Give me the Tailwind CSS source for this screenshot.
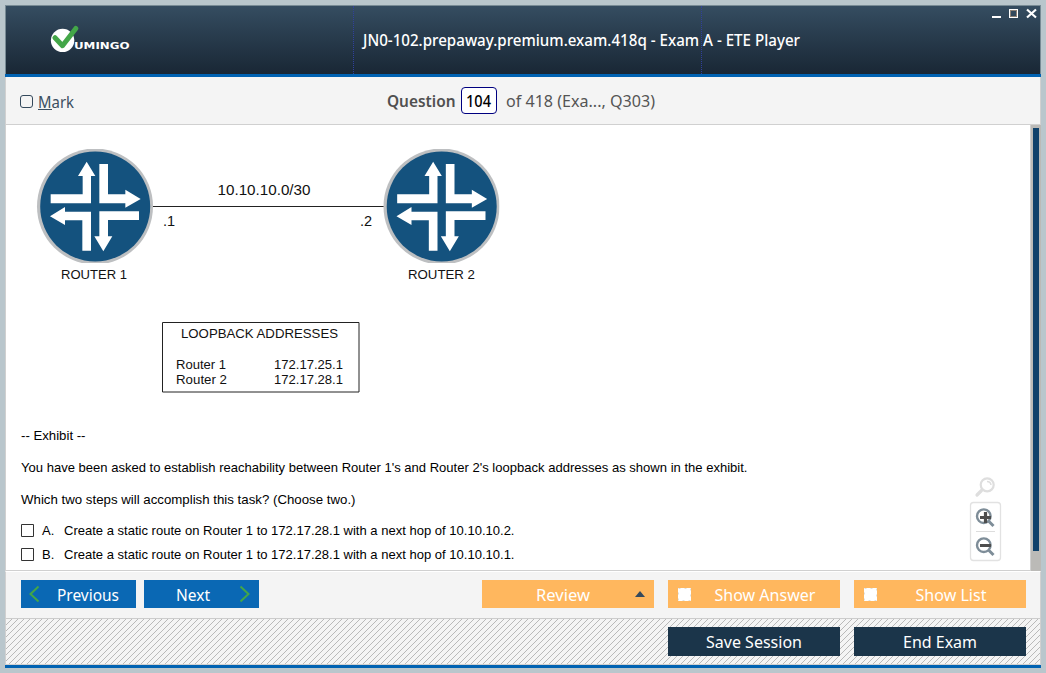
<!DOCTYPE html>
<html lang="en">
<head>
<meta charset="utf-8">
<title>ETE Player</title>
<script src="https://cdn.jsdelivr.net/npm/@tailwindcss/browser@4"></script>
</head>
<body class="w-[1046px] h-[673px] overflow-hidden bg-[#b9c6cc] p-[5px] font-['Noto_Sans',sans-serif]">
<div class="flex h-[663px] w-[1036px] flex-col">
  <header class="grid h-[69px] shrink-0 border border-b-0 border-[#788b95] bg-linear-to-b from-[#354d61] to-[#192735]">
    <div class="col-start-1 row-start-1 flex">
      <div class="w-[348px] shrink-0 border-r border-dotted border-[#30409c]">
        <svg class="ml-[44px] mt-[19px] block" width="84" height="30" viewBox="50 25 84 30">
          <circle cx="62.6" cy="40.4" r="11.7" fill="#fff"/>
          <path d="M55 37.700l7.500 8L75.800 28.400" fill="none" stroke="#43a648" stroke-width="5" stroke-linecap="round" stroke-linejoin="round"/>
          <text x="74" y="49" font-family="DejaVu Sans" font-weight="bold" font-size="9" fill="#fff" textLength="55.500" lengthAdjust="spacingAndGlyphs">UMINGO</text>
        </svg>
      </div>
      <div class="w-[348px] shrink-0 border-r border-dotted border-[#30409c]"></div>
    </div>
    <div class="col-start-1 row-start-1 flex items-start justify-between pl-[353px] pr-[2px]">
      <h1 class="mt-[20px]">
        <svg class="block" width="448" height="30"><text x="4" y="20" font-size="15.500" font-weight="500" fill="#fff" textLength="437" lengthAdjust="spacingAndGlyphs">JN0-102.prepaway.premium.exam.418q - Exam A - ETE Player</text></svg>
      </h1>
      <svg class="mt-[2px] block" width="48" height="12" viewBox="990 8 48 12" shape-rendering="crispEdges">
        <path d="M992 16h9v2h-9z" fill="#fff"/>
        <path d="M1009.500 9.500h8v8h-8z" fill="none" stroke="#fff"/>
        <path d="M1010.500 10.500h6v6h-6z" fill="none" stroke="#8d8176"/>
        <path d="M1027 9.500l9 8M1036 9.500l-9 8" stroke="#fff" stroke-width="2.200" shape-rendering="auto"/>
      </svg>
    </div>
  </header>
  <div class="h-[3px] shrink-0 bg-[#0062b2]"></div>

  <section class="flex h-[48px] shrink-0 border-x border-b border-[#d0d0d0] bg-[#f4f4f4]">
    <label class="flex w-[381px] items-start pl-[14px]">
      <span class="mt-[18px] block size-[13px] rounded-[3px] border border-[#34495c]"></span>
      <svg class="ml-[4px] mt-[12px] block" width="44" height="28"><text x="1" y="19" font-size="16" fill="#3c4f61" textLength="36" lengthAdjust="spacingAndGlyphs">Mark</text><path d="M1 20.500h14" stroke="#3c4f61"/></svg>
    </label>
    <div class="flex">
      <svg class="mt-[12px] block" width="74" height="28"><text x="0" y="18" font-size="16" font-weight="600" fill="#505050" textLength="68.500" lengthAdjust="spacingAndGlyphs">Question</text></svg>
      <div class="mt-[10px] h-[27px] w-[36px] rounded-[4px] border border-[#000080] bg-white"><svg class="block" width="34" height="25"><text x="4" y="19" font-size="15.500" font-weight="500" fill="#000" textLength="25" lengthAdjust="spacingAndGlyphs">104</text></svg></div>
      <svg class="ml-[9px] mt-[12px] block" width="155" height="28"><text x="0" y="18" font-size="16" fill="#555" textLength="149" lengthAdjust="spacingAndGlyphs">of 418 (Exa..., Q303)</text></svg>
    </div>
  </section>

  <main class="relative flex h-[446px] shrink-0 border-l border-[#d0d0d0] bg-white font-['Liberation_Sans',sans-serif]">
    <div class="w-[1025px] shrink-0 border-b border-r border-[#d0d0d0] text-[#000]">
      <svg class="block" width="1024" height="445" viewBox="6 125 1024 445" font-family="Liberation Sans">
        <defs>
          <clipPath id="badge"><path d="M36 149h117v114H36z"/></clipPath>
          <g id="router">
            <g clip-path="url(#badge)">
              <circle cx="95" cy="206.500" r="58" fill="#bdbfc1"/>
              <circle cx="95.200" cy="206.500" r="55" fill="#14527e"/>
            </g>
            <g transform="translate(20 140) scale(.33333)" fill="#fff">
              <path d="M200 65l26 43h-13v82H92v-27h96v-55h-14zM238 72h26v91h52v-14l46 28-46 26v-13h-78zM90 229l45-28v14h78v117h-26v-91h-52v14zM357 214v26h-93v49h13l-27 45-27-45h15v-75z"/>
            </g>
          </g>
        </defs>
        <path d="M153 206.500h232" stroke="#222"/>
        <use href="#router"/>
        <use href="#router" x="346.500"/>
        <g fill="#111" font-size="13.500">
          <text x="217.500" y="195" font-size="14.500" textLength="93" lengthAdjust="spacingAndGlyphs">10.10.10.0/30</text>
          <text x="163" y="226" font-size="14.500">.1</text>
          <text x="360" y="226" font-size="14.500">.2</text>
          <text x="61" y="279" textLength="66" lengthAdjust="spacingAndGlyphs">ROUTER 1</text>
          <text x="408" y="279" textLength="67" lengthAdjust="spacingAndGlyphs">ROUTER 2</text>
          <path d="M162.500 322.500h196.500v69.500h-196.500z" fill="none" stroke="#222"/>
          <text x="181" y="337.500" font-size="13" textLength="157" lengthAdjust="spacingAndGlyphs">LOOPBACK ADDRESSES</text>
          <text x="176" y="369" font-size="13" textLength="50" lengthAdjust="spacingAndGlyphs">Router 1</text>
          <text x="274" y="369" font-size="13" textLength="69" lengthAdjust="spacingAndGlyphs">172.17.25.1</text>
          <text x="176" y="384" font-size="13" textLength="51" lengthAdjust="spacingAndGlyphs">Router 2</text>
          <text x="274" y="384" font-size="13" textLength="69" lengthAdjust="spacingAndGlyphs">172.17.28.1</text>
        </g>
        <g fill="#000" font-size="13">
          <text x="21" y="440" textLength="64.500" lengthAdjust="spacingAndGlyphs">-- Exhibit --</text>
          <text x="21" y="472" textLength="726.500" lengthAdjust="spacingAndGlyphs">You have been asked to establish reachability between Router 1's and Router 2's loopback addresses as shown in the exhibit.</text>
          <text x="21" y="504" textLength="334.500" lengthAdjust="spacingAndGlyphs">Which two steps will accomplish this task? (Choose two.)</text>
          <path d="M21.500 524.500h12v12h-12zM21.500 548.500h12v12h-12z" fill="#fff" stroke="#333"/>
          <text x="42" y="535">A.</text>
          <text x="64" y="535" textLength="450.500" lengthAdjust="spacingAndGlyphs">Create a static route on Router 1 to 172.17.28.1 with a next hop of 10.10.10.2.</text>
          <text x="42" y="559">B.</text>
          <text x="64" y="559" textLength="450.500" lengthAdjust="spacingAndGlyphs">Create a static route on Router 1 to 172.17.28.1 with a next hop of 10.10.10.1.</text>
        </g>
      </svg>
    </div>
    <div class="flex w-[10px] shrink-0 justify-center bg-[#bbbab7] pt-[3px]"><div class="h-[423px] w-[6px] bg-[#0f416b]"></div></div>
    <svg class="absolute left-[962px] top-[348px]" width="36" height="92" viewBox="968 473 36 92" fill="none">
      <circle cx="987.200" cy="484.800" r="6.500" stroke="#dedede" stroke-width="2.200"/>
      <path d="M981.500 490.500l-4.500 4.500" stroke="#dedede" stroke-width="3.200" stroke-linecap="round"/>
      <path d="M987 481.500q3.500 0 4 3.500" stroke="#dedede" stroke-width="1.500"/>
      <rect x="970.500" y="502.500" width="30" height="58" rx="3" fill="#fff" stroke="#e2e2e2" stroke-width="1.300"/>
      <path d="M976 531.500h19" stroke="#ddd"/>
      <g stroke="#7e8d98"><circle cx="983.800" cy="516.200" r="6.800" stroke-width="2.400"/><path d="M988.500 521l5 5" stroke-width="3"/>
      <circle cx="983.800" cy="545.200" r="6.800" stroke-width="2.400"/><path d="M988.500 550l5 5" stroke-width="3"/></g>
      <path d="M980 517.500h11M985.500 512v11M980 545.500h11" stroke="#4d4d4d" stroke-width="3.200"/>
    </svg>
  </main>

  <section class="flex h-[48px] shrink-0 items-start border-x border-b border-t border-x-[#d0d0d0] border-b-[#ccc] border-t-white bg-[#f4f4f4] pl-[15px] pt-[8px]">
    <button class="block h-[28px] w-[115px] bg-[#0a68b4]"><svg class="block" width="115" height="28"><path d="M17.500 6.500l-8 7.500 8 7.500" fill="none" stroke="#43a648" stroke-width="2"/><text x="36" y="21" font-size="16" fill="#fff" textLength="62" lengthAdjust="spacingAndGlyphs">Previous</text></svg></button>
    <button class="ml-[8px] block h-[28px] w-[115px] bg-[#0a68b4]"><svg class="block" width="115" height="28"><path d="M96.500 6.500l8 7.500-8 7.500" fill="none" stroke="#43a648" stroke-width="2"/><text x="32" y="21" font-size="16" fill="#fff" textLength="34" lengthAdjust="spacingAndGlyphs">Next</text></svg></button>
    <div class="ml-[223px] flex gap-[14px]">
      <button class="block h-[28px] w-[172px] bg-[#ffb75e]"><svg class="block" width="172" height="28"><text x="54" y="21" font-size="16" fill="#fff" textLength="54" lengthAdjust="spacingAndGlyphs">Review</text><path d="M153 17l5-6 5 6z" fill="#34495c"/></svg></button>
      <button class="block h-[28px] w-[172px] bg-[#ffb75e]"><svg class="block" width="172" height="28"><path d="M10 8h13v13H10z" fill="#fff"/><path d="M10.500 8.500h12v12h-12z" fill="none" stroke="#dfe0de" stroke-dasharray="2 4"/><text x="46.500" y="21" font-size="16" fill="#fff" textLength="101" lengthAdjust="spacingAndGlyphs">Show Answer</text></svg></button>
      <button class="block h-[28px] w-[172px] bg-[#ffb75e]"><svg class="block" width="172" height="28"><path d="M10 8h13v13H10z" fill="#fff"/><path d="M10.500 8.500h12v12h-12z" fill="none" stroke="#dfe0de" stroke-dasharray="2 4"/><text x="61.500" y="21" font-size="16" fill="#fff" textLength="71" lengthAdjust="spacingAndGlyphs">Show List</text></svg></button>
    </div>
  </section>

  <footer class="grid h-[46px] shrink-0 border-x border-b border-[#d0d0d0] bg-[#f4f4f4]">
    <svg class="col-start-1 row-start-1 block" width="1034" height="45"><defs><pattern id="hatch" width="6" height="6" patternUnits="userSpaceOnUse"><path d="M-1 7L7-1M-1 1L1-1M5 7L7 5" stroke="#b9b9b9" stroke-width="1"/></pattern></defs><rect width="1034" height="45" fill="url(#hatch)"/></svg>
    <div class="col-start-1 row-start-1 flex justify-end gap-[14px] pr-[14px] pt-[8px]">
      <button class="block h-[29px] w-[172px] bg-[#1b354a]"><svg class="block" width="172" height="29"><text x="38" y="21" font-size="16" fill="#fff" textLength="96" lengthAdjust="spacingAndGlyphs">Save Session</text></svg></button>
      <button class="block h-[29px] w-[172px] bg-[#1b354a]"><svg class="block" width="172" height="29"><text x="49" y="21" font-size="16" fill="#fff" textLength="74" lengthAdjust="spacingAndGlyphs">End Exam</text></svg></button>
    </div>
  </footer>
  <div class="h-[3px] shrink-0 bg-[#0062b2]"></div>
</div>
</body>
</html>
